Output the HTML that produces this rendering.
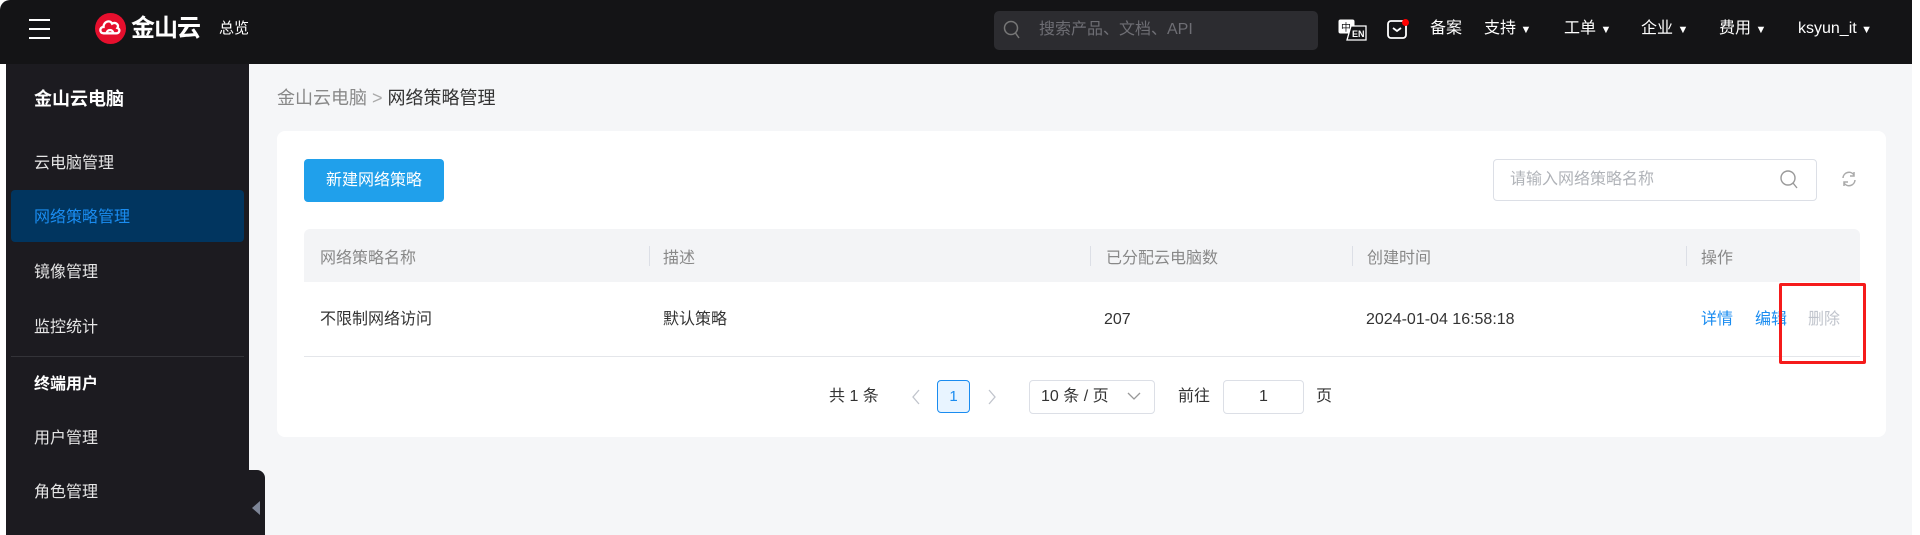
<!DOCTYPE html>
<html><head><meta charset="utf-8"><style>
*{box-sizing:border-box;margin:0;padding:0}
body{width:1920px;height:535px;overflow:hidden;background:#fff;font-family:"Liberation Sans","Noto Sans CJK SC",sans-serif;position:relative}
.a{position:absolute;white-space:nowrap;line-height:20px}
#hdr{position:absolute;left:0;top:0;width:1912px;height:64px;background:#141416;border-top-left-radius:10px}
#side{position:absolute;left:6px;top:64px;width:243px;height:471px;background:#1c1b20}
#main{position:absolute;left:249px;top:64px;width:1663px;height:471px;background:#f5f6f8}
.nav{color:#fff;font-size:16px;top:19px}
.si{color:#e6e6e6;font-size:16px;left:34px}
.th{color:#888;font-size:16px;top:249px}
.sep{position:absolute;top:246px;width:1px;height:20px;background:#dcdfe6}
.td{color:#333;font-size:16px;top:310px}
.pg{color:#333;font-size:16px;top:387px}
</style></head><body>
<div id="hdr"></div>
<div class="a" style="left:29px;top:19px;width:21px;height:2px;background:#fff"></div>
<div class="a" style="left:29px;top:28px;width:21px;height:2px;background:#fff"></div>
<div class="a" style="left:29px;top:37px;width:21px;height:2px;background:#fff"></div>
<svg class="a" style="left:95px;top:13px" width="31" height="31" viewBox="0 0 29 29"><circle cx="14.5" cy="14.5" r="14.5" fill="#e60f2d"/><path d="M8 19 C4 19 4 13 8 13 C8 8 14 6 16 10 C19 8 23 11 21 14 C24 15 23 19 20 19 Z M11 19 C11 15 17 15 17 19" fill="none" stroke="#fff" stroke-width="2.2"/></svg>
<div class="a" style="left:131px;top:16px;line-height:26px;color:#fff;font-size:24px;font-weight:bold;letter-spacing:-1px">金山云</div>
<div class="a nav" style="left:219px;font-size:15px">总览</div>
<div class="a" style="left:994px;top:11px;width:324px;height:39px;background:#2c2c30;border-radius:5px"></div>
<svg class="a" style="left:1003px;top:20px" width="18" height="20" viewBox="0 0 18 20"><circle cx="8" cy="8" r="6.5" fill="none" stroke="#777" stroke-width="1.5"/><path d="M12.5 13 L16 18" stroke="#777" stroke-width="1.5"/></svg>
<div class="a" style="left:1039px;top:20px;color:#6e6e74;font-size:16px">搜索产品、文档、API</div>
<svg class="a" style="left:1338px;top:19px" width="30" height="22" viewBox="0 0 30 22"><rect x="0.5" y="0.5" width="16" height="14" rx="2" fill="#fff"/><text x="3" y="12" font-size="10" fill="#141416" font-family="Noto Sans CJK SC">中</text><path d="M13 7 H28 V21 H9 Z" fill="#141416" stroke="#fff" stroke-width="1.3"/><text x="14" y="18" font-size="9" fill="#fff" font-family="Liberation Sans" font-weight="bold">EN</text></svg>
<svg class="a" style="left:1387px;top:18px" width="24" height="22" viewBox="0 0 24 22"><rect x="1" y="3" width="18" height="17" rx="3" fill="none" stroke="#fff" stroke-width="1.8"/><path d="M6 10 L10 13 L14 10" fill="none" stroke="#fff" stroke-width="1.8"/><circle cx="18.5" cy="4.5" r="3.5" fill="#f00"/></svg>
<div class="a nav" style="left:1430px">备案</div>
<div class="a nav" style="left:1484px">支持 <span style="font-size:11px">▼</span></div>
<div class="a nav" style="left:1564px">工单 <span style="font-size:11px">▼</span></div>
<div class="a nav" style="left:1641px">企业 <span style="font-size:11px">▼</span></div>
<div class="a nav" style="left:1719px">费用 <span style="font-size:11px">▼</span></div>
<div class="a nav" style="left:1798px">ksyun_it <span style="font-size:11px">▼</span></div>

<div id="side"></div>
<div class="a" style="left:34px;top:87px;line-height:24px;color:#fff;font-size:18px;font-weight:bold">金山云电脑</div>
<div class="a si" style="top:154px">云电脑管理</div>
<div class="a" style="left:11px;top:190px;width:233px;height:52px;background:#01355f;border-radius:4px"></div>
<div class="a si" style="top:208px;color:#1a8cf0">网络策略管理</div>
<div class="a si" style="top:263px">镜像管理</div>
<div class="a si" style="top:318px">监控统计</div>
<div class="a" style="left:11px;top:356px;width:233px;height:1px;background:#333338"></div>
<div class="a" style="left:34px;top:375px;color:#fff;font-size:16px;font-weight:bold">终端用户</div>
<div class="a si" style="top:429px">用户管理</div>
<div class="a si" style="top:483px">角色管理</div>

<div id="main"></div>
<div class="a" style="left:249px;top:470px;width:16px;height:65px;background:#1c1b20;border-top-right-radius:8px"></div>
<div class="a" style="left:252px;top:501px;width:0;height:0;border-top:7px solid transparent;border-bottom:7px solid transparent;border-right:8px solid #7d8596"></div>

<div class="a" style="left:277px;top:86px;line-height:24px;font-size:18px;color:#888">金山云电脑 <span style="color:#aaa">&gt;</span> <span style="color:#333">网络策略管理</span></div>
<div class="a" style="left:277px;top:131px;width:1609px;height:306px;background:#fff;border-radius:8px"></div>
<div class="a" style="left:304px;top:159px;width:140px;height:43px;background:#20a0eb;border-radius:4px;color:#fff;font-size:16px;text-align:center;line-height:43px">新建网络策略</div>
<div class="a" style="left:1493px;top:159px;width:324px;height:42px;border:1px solid #dcdfe6;border-radius:4px"></div>
<div class="a" style="left:1510px;top:170px;color:#b0b3b8;font-size:16px">请输入网络策略名称</div>
<svg class="a" style="left:1779px;top:169px" width="20" height="22" viewBox="0 0 20 22"><circle cx="9" cy="9" r="7" fill="none" stroke="#999" stroke-width="1.4"/><path d="M14 14 L18 19" stroke="#999" stroke-width="1.4"/></svg>
<svg class="a" style="left:1841px;top:171px" width="16" height="16" viewBox="0 0 16 16"><path d="M2 7 A6 6 0 0 1 13 4 M14 9 A6 6 0 0 1 3 12" fill="none" stroke="#aaa" stroke-width="1.5"/><path d="M13 1 V5 H9 M3 15 V11 H7" fill="none" stroke="#aaa" stroke-width="1.5"/></svg>

<div class="a" style="left:304px;top:229px;width:1556px;height:53px;background:#f3f4f6;border-radius:6px 6px 0 0"></div>
<div class="a th" style="left:320px">网络策略名称</div>
<div class="sep" style="left:649px"></div><div class="a th" style="left:663px">描述</div>
<div class="sep" style="left:1090px"></div><div class="a th" style="left:1106px">已分配云电脑数</div>
<div class="sep" style="left:1352px"></div><div class="a th" style="left:1367px">创建时间</div>
<div class="sep" style="left:1686px"></div><div class="a th" style="left:1701px">操作</div>
<div class="a" style="left:304px;top:356px;width:1556px;height:1px;background:#e4e6ea"></div>
<div class="a td" style="left:320px">不限制网络访问</div>
<div class="a td" style="left:663px">默认策略</div>
<div class="a td" style="left:1104px">207</div>
<div class="a td" style="left:1366px">2024-01-04 16:58:18</div>
<div class="a td" style="left:1701px;color:#1a8cf0">详情</div>
<div class="a td" style="left:1755px;color:#1a8cf0">编辑</div>
<div class="a td" style="left:1808px;color:#c0c4cc">删除</div>
<div class="a" style="left:1779px;top:283px;width:87px;height:81px;border:3px solid #f51b1b;border-radius:2px"></div>

<div class="a pg" style="left:829px">共 1 条</div>
<svg class="a" style="left:911px;top:389px" width="10" height="16" viewBox="0 0 10 16"><path d="M8 1 L2 8 L8 15" fill="none" stroke="#c0c4cc" stroke-width="1.3"/></svg>
<div class="a" style="left:937px;top:380px;width:33px;height:33px;border:1px solid #1a8cf0;background:#e8f4ff;border-radius:4px;color:#1a8cf0;font-size:15px;text-align:center;line-height:31px">1</div>
<svg class="a" style="left:987px;top:389px" width="10" height="16" viewBox="0 0 10 16"><path d="M2 1 L8 8 L2 15" fill="none" stroke="#c0c4cc" stroke-width="1.3"/></svg>
<div class="a" style="left:1029px;top:380px;width:126px;height:34px;border:1px solid #dcdfe6;border-radius:4px"></div>
<div class="a pg" style="left:1041px">10 条 / 页</div>
<svg class="a" style="left:1127px;top:391px" width="14" height="10" viewBox="0 0 14 10"><path d="M1 2 L7 8 L13 2" fill="none" stroke="#999" stroke-width="1.3"/></svg>
<div class="a pg" style="left:1178px">前往</div>
<div class="a" style="left:1223px;top:380px;width:81px;height:34px;border:1px solid #dcdfe6;border-radius:4px;color:#333;font-size:16px;text-align:center;line-height:32px">1</div>
<div class="a pg" style="left:1316px">页</div>
</body></html>
